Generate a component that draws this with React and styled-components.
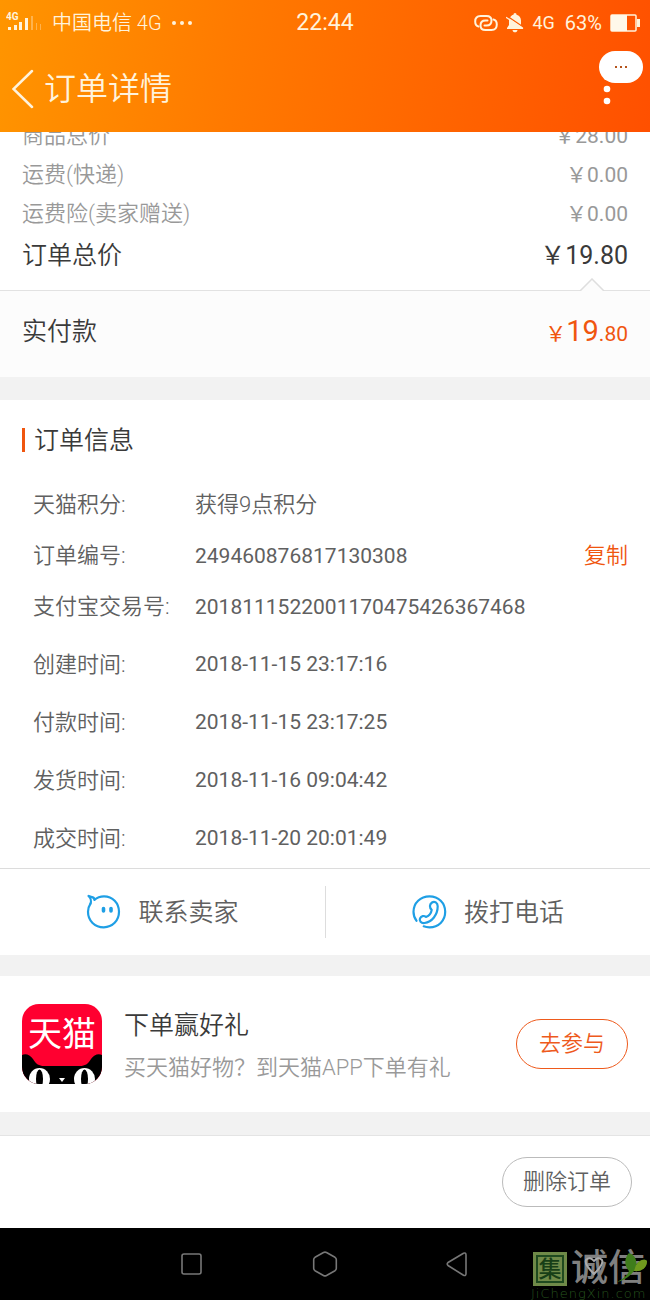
import React from "react";
import styled, { createGlobalStyle } from "styled-components";

const GlobalStyle = createGlobalStyle`
  * {
    box-sizing: border-box;
  }
  body {
    margin: 0;
    background: #f2f2f2;
    font-family: Roboto, "Noto Sans CJK SC", sans-serif;
    font-weight: 350;
    line-height: 1.4;
    color: #3a3a3a;
  }
  button {
    padding: 0;
    border: 0;
    background: none;
    font-family: inherit;
    font-weight: inherit;
    line-height: inherit;
    cursor: pointer;
  }
  svg {
    display: block;
    flex: none;
  }
`;

const Page = styled.div`
  display: flex;
  flex-direction: column;
  min-height: 100vh;
`;

const Header = styled.header`
  position: sticky;
  top: 0;
  z-index: 1;
  height: 132px;
  color: #fff3dc;
  background: linear-gradient(100deg, #ff9500, #ff7a00 36%, #ff5000);
`;

const StatusBar = styled.div`
  display: grid;
  grid-template-columns: 1fr auto 1fr;
  align-items: center;
  height: 46px;
  padding: 0 6px;
  font-size: 20px;
`;

const StatusGroup = styled.div`
  display: flex;
  align-items: center;
  justify-content: ${(props) => (props.$end ? "flex-end" : "flex-start")};
  gap: ${(props) => (props.$end ? "8px" : "10px")};
  padding-right: ${(props) => (props.$end ? "4px" : "0")};
  font-weight: ${(props) => (props.$end ? 400 : 350)};
`;

const Network = styled.span`
  font-size: 18px;
`;

const Percent = styled.span`
  margin-left: 2px;
`;

const Clock = styled.time`
  font-size: 23px;
  font-weight: 400;
`;

const TitleBar = styled.div`
  display: flex;
  align-items: center;
  height: 86px;
  padding: 0 22px 0 12px;
  position: relative;
`;

const BackButton = styled.button`
  margin-right: 10px;
  color: inherit;
`;

const PageTitle = styled.h1`
  flex: 1;
  margin: 0;
  font-size: 32px;
  font-weight: inherit;
`;

const MenuButton = styled.button`
  padding: 0 17px;
`;

const Bubble = styled.button`
  position: absolute;
  top: 5px;
  right: 7px;
  display: flex;
  align-items: center;
  justify-content: center;
  width: 44px;
  height: 32px;
  border-radius: 16px;
  background: #fff;
`;

// the list is scrolled a little way under the header
const Prices = styled.section`
  position: relative;
  margin-top: -15px;
  padding: 0 22px 13px;
  border-bottom: 1px solid #e2e2e2;
  background: #fff;
`;

const PriceRow = styled.div`
  display: flex;
  align-items: center;
  justify-content: space-between;
  height: ${(props) => (props.$total ? "43px" : "39px")};
  font-size: ${(props) => (props.$total ? "25px" : "22px")};
  color: ${(props) => (props.$total ? "#3a3a3a" : "#999")};
`;

const Amount = styled.span`
  font-size: ${(props) => (props.$total ? "25px" : "21px")};
  font-weight: 400;
`;

const Notch = styled.svg`
  position: absolute;
  right: 45px;
  bottom: -1px;
`;

const Paid = styled.section`
  display: flex;
  align-items: center;
  justify-content: space-between;
  height: 86px;
  padding: 0 22px 6px;
  background: #fcfcfc;
  font-size: 25px;
`;

const PaidAmount = styled.strong`
  font-size: 21px;
  font-weight: 400;
  color: #f0560f;
`;

const Big = styled.span`
  font-size: 29px;
`;

const OrderInfo = styled.section`
  margin-top: 23px;
  padding: 0 22px;
  background: #fff;
  border-bottom: 1px solid #dcdcdc;
`;

const SectionTitle = styled.h2`
  display: flex;
  align-items: center;
  gap: 9px;
  height: 80px;
  margin: 0;
  font-size: 25px;
  font-weight: inherit;

  &::before {
    content: "";
    width: 3px;
    height: 24px;
    background: #f0560f;
  }
`;

const InfoList = styled.dl`
  margin: 0;
  padding-bottom: ${(props) => (props.$times ? "0" : "3px")};
`;

const InfoRow = styled.div`
  display: flex;
  align-items: center;
  height: ${(props) => (props.$tall ? "58px" : "51px")};
  padding-left: 11px;
  color: #606060;

  dt {
    width: 162px;
    font-size: 22px;
    white-space: nowrap;
  }
  dd {
    flex: 1;
    margin: 0;
    font-size: ${(props) => (props.$words ? "22px" : "21px")};
    font-weight: ${(props) => (props.$words ? 350 : 400)};
  }
`;

const CopyButton = styled.button`
  font-size: 22px;
  color: #f0560f;
`;

const Contact = styled.section`
  display: grid;
  grid-template-columns: 1fr 1fr;
  align-items: center;
  height: 86px;
  background: #fff;
`;

const ContactButton = styled.button`
  display: flex;
  align-items: center;
  justify-content: center;
  gap: 17px;
  height: 52px;
  font-size: 25px;
  color: #606060;

  & + & {
    border-left: 1px solid #ddd;
  }
`;

const Promo = styled.section`
  display: flex;
  align-items: center;
  gap: 22px;
  height: 136px;
  margin-top: 21px;
  padding: 0 22px;
  background: #fff;
`;

const PromoText = styled.div`
  flex: 1;
  padding-top: 6px;
`;

const PromoTitle = styled.h3`
  margin: 0;
  font-size: 25px;
  line-height: 42px;
  font-weight: inherit;
`;

const PromoNote = styled.p`
  margin: 0;
  font-size: 22px;
  line-height: 42px;
  color: #999;
`;

const Pill = styled.button`
  flex: none;
  height: 50px;
  padding: 0 ${(props) => (props.$accent ? "22px" : "20px")};
  border: 1px solid ${(props) => (props.$accent ? "#ee5a1c" : "#bbb")};
  border-radius: 25px;
  background: #fff;
  font-size: 22px;
  color: ${(props) => (props.$accent ? "#ee5a1c" : "#606060")};
`;

const Footer = styled.footer`
  display: flex;
  align-items: center;
  justify-content: flex-end;
  flex: 1;
  min-height: 93px;
  margin-top: 23px;
  padding: 0 18px;
  border-top: 1px solid #e4e4e4;
  background: #fff;
`;

const NavBar = styled.nav`
  position: relative;
  display: flex;
  align-items: center;
  justify-content: center;
  gap: 108px;
  height: 72px;
  background: #000;
`;

const Watermark = styled.div`
  position: absolute;
  right: 0;
  bottom: 0;
  width: 119px;
  color: #808080;
`;

const Brand = styled.div`
  display: flex;
  align-items: center;
  gap: 4px;
  height: 36px;
  padding-left: 2px;
  font-size: 37px;
  line-height: 38px;
  font-weight: 500;
`;

const Stamp = styled.span`
  width: 34px;
  height: 34px;
  border: 2px solid #6f8a48;
  outline: 2px solid #1f4a1f;
  outline-offset: -5px;
  background: #6f8a48;
  color: #173f17;
  font-size: 23px;
  line-height: 31px;
  text-align: center;
`;

const Leaf = styled.svg`
  position: absolute;
  right: 0;
  top: 0;
`;

const Site = styled.div`
  font-family: "DejaVu Sans", sans-serif;
  font-size: 13px;
  line-height: 13px;
  letter-spacing: 1px;
  color: #27551f;
  white-space: nowrap;
`;

const prices = [
  { label: "商品总价", amount: "\uffe528.00" },
  { label: "运费(快递)", amount: "\uffe50.00" },
  { label: "运费险(卖家赠送)", amount: "\uffe50.00" },
  { label: "订单总价", amount: "\uffe519.80", total: true },
];

const details = [
  { label: "天猫积分:", value: "获得9点积分", words: true },
  { label: "订单编号:", value: "249460876817130308", copy: true },
  { label: "支付宝交易号:", value: "2018111522001170475426367468" },
];

const times = [
  { label: "创建时间:", value: "2018-11-15 23:17:16" },
  { label: "付款时间:", value: "2018-11-15 23:17:25" },
  { label: "发货时间:", value: "2018-11-16 09:04:42" },
  { label: "成交时间:", value: "2018-11-20 20:01:49" },
];

const Signal = () => (
  <svg width="36" height="22" viewBox="0 0 36 22" fill="currentColor">
    <text x="0" y="8" fontSize="10" fontWeight="700">
      4G
    </text>
    <rect x="2" y="15" width="3" height="3" />
    <rect x="8" y="13" width="3" height="5" />
    <rect x="13" y="10" width="3" height="8" />
    <rect x="19" y="6" width="3" height="12" />
    <g opacity="0.35">
      <rect x="25" y="4" width="2" height="14" />
      <rect x="30" y="11" width="1" height="7" />
      <rect x="34" y="12" width="1" height="6" />
    </g>
  </svg>
);

const Dots = ({ width, r }) => (
  <svg width={width} height="6" fill="currentColor">
    <circle cx={r} cy="3" r={r} />
    <circle cx={width / 2} cy="3" r={r} />
    <circle cx={width - r} cy="3" r={r} />
  </svg>
);

const LinkIcon = () => (
  <svg width="24" height="18" viewBox="0 0 24 18" fill="none" stroke="currentColor" strokeWidth="2" strokeLinecap="round">
    <path d="M4.500 12.500C2.200 12 1.200 10 1.200 7.500C1.200 4 3.200 2 6.500 2H12.500C15.500 2 17.500 3.700 17.500 6.500C17.500 9.800 15.500 11.500 12.500 11.500H10.500" />
    <path d="M19.500 5.500C21.800 6 22.800 8 22.800 10.500C22.800 14 20.800 16 17.500 16H11.500C8.500 16 6.500 14.300 6.500 11.500C6.500 8.200 8.500 6.500 11.500 6.500H13.500" />
  </svg>
);

const BellOff = () => (
  <svg width="18" height="20" viewBox="0 0 18 20" fill="currentColor">
    <path d="M9 0C10 0 10.500.7 10.500 1.800C13.200 2.500 15 4.700 15 7.500V12L17 15V16H1V15L3 12V7.500C3 4.700 4.800 2.500 7.500 1.800C7.500.7 8 0 9 0ZM6.500 17H11.500C11.300 18.500 10.400 19.300 9 19.300S6.700 18.500 6.500 17Z" />
    <path d="M1 3L18 14.500" stroke="#ff5d00" strokeWidth="1.300" />
    <path d="M0 4.200L17 15.500" stroke="currentColor" strokeWidth="1.300" />
  </svg>
);

const Battery = () => (
  <svg width="30" height="18" viewBox="0 0 30 18">
    <rect x="1" y="1" width="25" height="16" rx="1" fill="none" stroke="#fff3dc" strokeWidth="1.500" />
    <rect x="1" y="1" width="16" height="16" fill="#fff8ea" />
    <rect x="27" y="5" width="3" height="8" fill="#fff3dc" />
  </svg>
);

const SellerIcon = () => (
  <svg width="35" height="36" viewBox="0 0 35 36" fill="none" stroke="#1f9fe5" strokeWidth="2.200" strokeLinejoin="round" strokeLinecap="round">
    <path d="M8.500 5.800C11 3.500 14.300 2.300 18 2.300C26.500 2.300 33 9 33 17.800S26.500 33.300 17.800 33.300C8.800 33.300 2 26.800 2 17.800C2 14.800 3 11.800 4.500 9.600" />
    <path d="M4.500 9.600C5.500 7.300 4.500 3.800 2.500 2C4.500 3.500 8.500 2 8.500 5.800" />
    <rect x="16.500" y="13.500" width="2" height="4.500" rx="1" fill="#1f9fe5" strokeWidth="1.600" />
    <rect x="24" y="13.500" width="2" height="4.500" rx="1" fill="#1f9fe5" strokeWidth="1.600" />
  </svg>
);

const PhoneIcon = () => (
  <svg width="35" height="36" viewBox="0 0 35 36" fill="none" stroke="#1f9fe5" strokeWidth="2.200" strokeLinejoin="round" strokeLinecap="round">
    <path d="M4.500 26.800C2.500 24.300 1.500 21.300 1.500 17.800C1.500 8.800 8.500 2.300 17.500 2.300S33.200 8.800 33.200 17.800S26.500 33.300 17.500 33.300C15.500 33.300 13.500 33 11.700 32.300" />
    <path d="M20 8.500C22.500 6.800 25.700 8.800 25.700 12.300C25.700 20.800 20 28 12.500 29C9 29.500 7 26.800 8 24.500C9.300 21.800 12 21.300 14 23C17.200 21.800 19.200 19 19.700 15.800C17.300 13.800 17.300 10.300 20 8.500Z" />
  </svg>
);

const TmallLogo = () => (
  <svg width="80" height="80" viewBox="0 0 80 80">
    <clipPath id="tile">
      <rect width="80" height="80" rx="17" />
    </clipPath>
    <g clipPath="url(#tile)">
      <rect width="80" height="80" fill="#ff0030" />
      <text x="40" y="42" fontSize="34" fontWeight="400" fill="#fff" textAnchor="middle">
        天猫
      </text>
      <path d="M0 51C4 49 8 51 11 55C14 60 17 62 22 62H58C63 62 66 60 69 55C72 51 76 49 80 51V80H0Z" fill="#000" />
      <ellipse cx="17.500" cy="75" rx="10.500" ry="11" fill="#fff" />
      <ellipse cx="62.500" cy="75" rx="10.500" ry="11" fill="#fff" />
      <ellipse cx="17.500" cy="75" rx="3.500" ry="9.500" fill="#000" />
      <ellipse cx="62.500" cy="75" rx="3.500" ry="9.500" fill="#000" />
      <path d="M37 74H43L40 78Z" fill="#fff" />
    </g>
  </svg>
);

function InfoGroup({ items, tall }) {
  return (
    <InfoList $times={tall}>
      {items.map((item) => (
        <InfoRow key={item.label} $tall={tall} $words={item.words}>
          <dt>{item.label}</dt>
          <dd>{item.value}</dd>
          {item.copy && <CopyButton>复制</CopyButton>}
        </InfoRow>
      ))}
    </InfoList>
  );
}

function App() {
  return (
    <>
      <GlobalStyle />
      <Page>
        <Header>
          <StatusBar>
            <StatusGroup>
              <Signal />
              <span>中国电信 4G</span>
              <Dots width={20} r={2} />
            </StatusGroup>
            <Clock>22:44</Clock>
            <StatusGroup $end>
              <LinkIcon />
              <BellOff />
              <Network>4G</Network>
              <Percent>63%</Percent>
              <Battery />
            </StatusGroup>
          </StatusBar>
          <TitleBar>
            <BackButton aria-label="返回">
              <svg width="22" height="40" viewBox="0 0 22 40" fill="none" stroke="currentColor" strokeWidth="2.500" strokeLinecap="round">
                <path d="M20 2L1.500 20L20 38" />
              </svg>
            </BackButton>
            <PageTitle>订单详情</PageTitle>
            <MenuButton aria-label="更多">
              <svg width="8" height="32" viewBox="0 0 8 32" fill="#fff">
                <circle cx="4" cy="4" r="3.300" />
                <circle cx="4" cy="16" r="3.300" />
                <circle cx="4" cy="28" r="3.300" />
              </svg>
            </MenuButton>
            <Bubble aria-label="消息">
              <svg width="12" height="2" fill="#b5541c">
                <rect width="2" height="2" />
                <rect x="5" width="2" height="2" />
                <rect x="10" width="2" height="2" />
              </svg>
            </Bubble>
          </TitleBar>
        </Header>

        <Prices>
          {prices.map((item) => (
            <PriceRow key={item.label} $total={item.total}>
              <span>{item.label}</span>
              <Amount $total={item.total}>{item.amount}</Amount>
            </PriceRow>
          ))}
          <Notch width="26" height="13" viewBox="0 0 26 13">
            <path d="M1 13L13 1L25 13" fill="#fcfcfc" stroke="#dedede" strokeWidth="1.500" />
          </Notch>
        </Prices>
        <Paid>
          <span>实付款</span>
          <PaidAmount>
            {"\uffe5"}
            <Big>19</Big>.80
          </PaidAmount>
        </Paid>

        <OrderInfo>
          <SectionTitle>订单信息</SectionTitle>
          <InfoGroup items={details} />
          <InfoGroup items={times} tall />
        </OrderInfo>
        <Contact>
          <ContactButton>
            <SellerIcon />
            联系卖家
          </ContactButton>
          <ContactButton>
            <PhoneIcon />
            拨打电话
          </ContactButton>
        </Contact>

        <Promo>
          <TmallLogo />
          <PromoText>
            <PromoTitle>下单赢好礼</PromoTitle>
            <PromoNote>{"买天猫好物\uff1f到天猫APP下单有礼"}</PromoNote>
          </PromoText>
          <Pill $accent>去参与</Pill>
        </Promo>

        <Footer>
          <Pill>删除订单</Pill>
        </Footer>

        <NavBar>
          <svg width="24" height="26" viewBox="0 0 24 26" fill="none" stroke="#777" strokeWidth="1.600">
            <rect x="2" y="3" width="19" height="20" rx="2" />
          </svg>
          <svg width="26" height="28" viewBox="0 0 26 28" fill="none" stroke="#777" strokeWidth="1.600" strokeLinejoin="round">
            <path d="M11.500 2.500Q13 1.700 14.500 2.500L23 7.300Q24.300 8.200 24.300 9.500V18.500Q24.300 19.800 23 20.700L14.500 25.500Q13 26.300 11.500 25.500L3 20.700Q1.700 19.800 1.700 18.500V9.500Q1.700 8.200 3 7.300Z" />
          </svg>
          <svg width="24" height="26" viewBox="0 0 24 26" fill="none" stroke="#777" strokeWidth="1.600" strokeLinejoin="round">
            <path d="M17.500 2.200Q20 1.200 20 4V22.500Q20 25.300 17.500 24.300L2 14.500Q.5 13 2 11.500Z" />
          </svg>
          <Watermark>
            <Brand>
              <Stamp>集</Stamp>
              <span>诚信</span>
            </Brand>
            <Site>JiChengXin.com</Site>
            <Leaf width="70" height="36" viewBox="0 0 70 36">
              <path d="M6 9Q10 5 14 10Q18 5 22 9Q24 13 14 23Q4 13 6 9Z" fill="none" stroke="#aaa" strokeWidth="2" />
              <path d="M49 20C44 15 44 7 49 2C55 4 57 9 56 14C60 8 65 8 67 10C67 17 61 21 54 20C50 25 45 29 37 31C43 28 47 25 49 20Z" fill="#3f7d1c" />
              <path d="M56 14C60 8 65 8 67 10C67 17 61 21 54 20Z" fill="#6f9a1e" />
            </Leaf>
          </Watermark>
        </NavBar>
      </Page>
    </>
  );
}

export default App;
